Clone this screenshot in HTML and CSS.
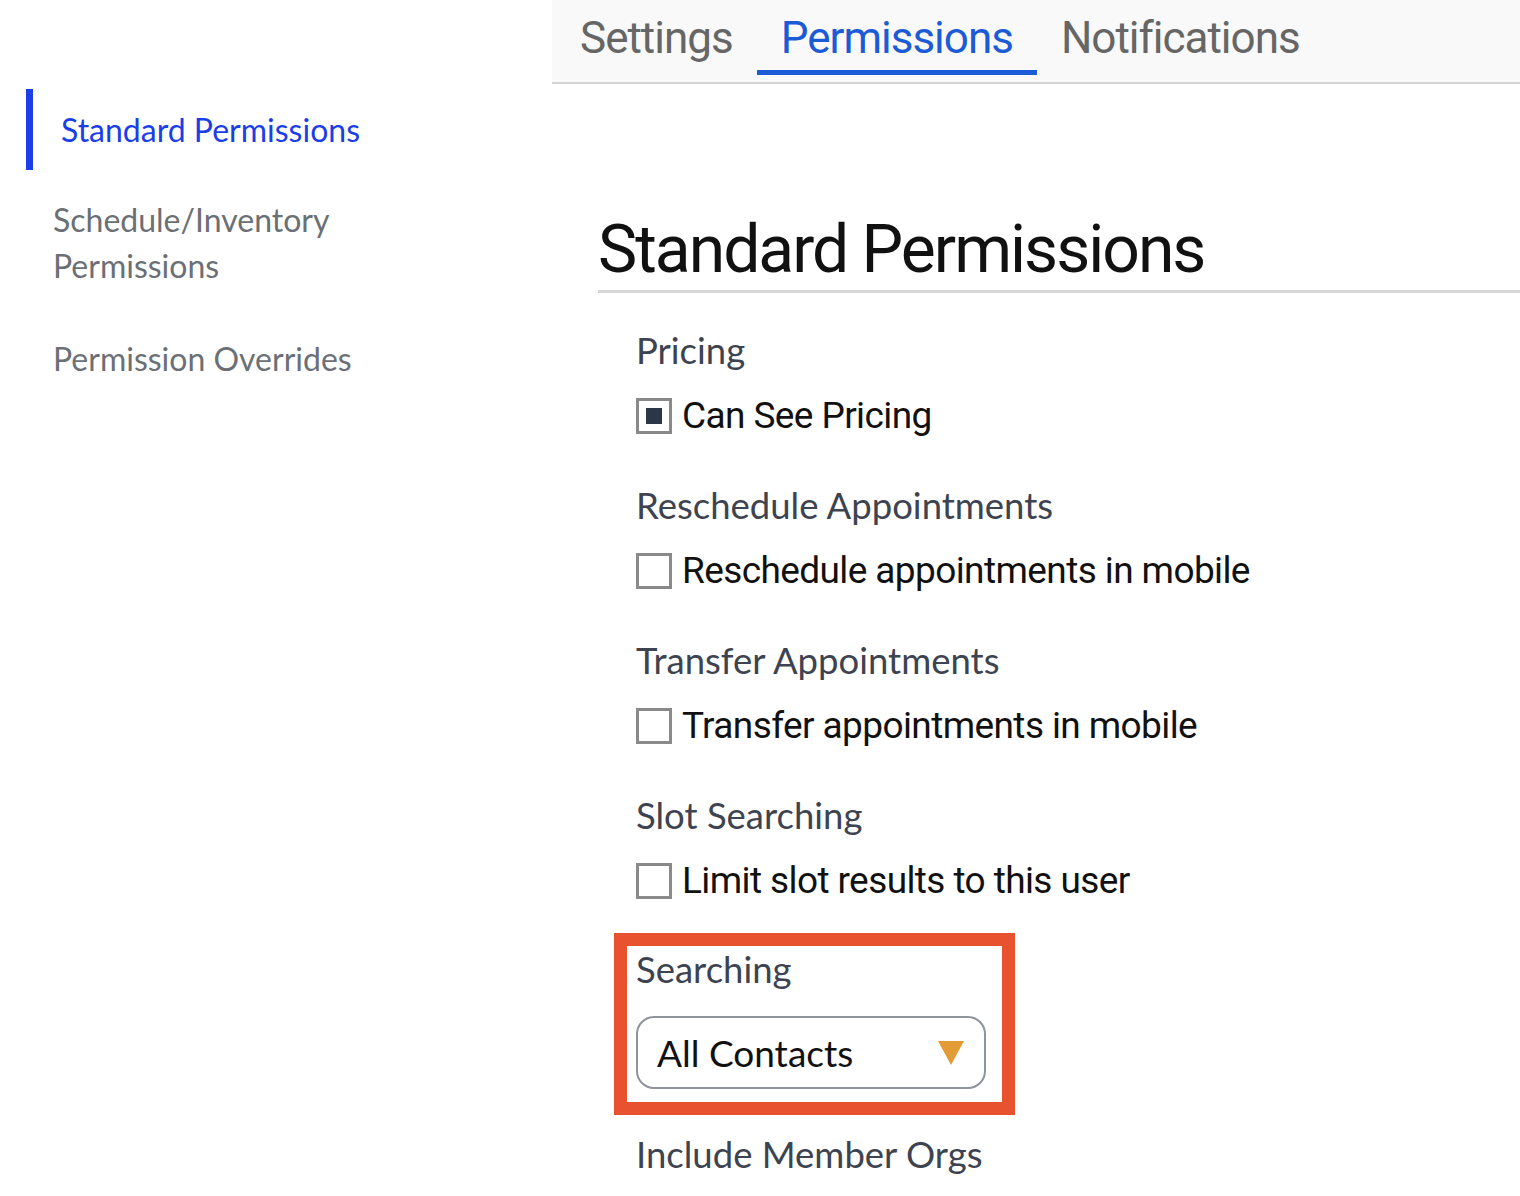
FILE: index.html
```html
<!DOCTYPE html>
<html lang="en">
<head>
<meta charset="utf-8">
<title>Permissions</title>
<link rel="stylesheet" href="styles.css">
</head>
<body>
<div class="app">
  <aside class="sidenav">
    <a class="nav-item active">Standard Permissions</a>
    <a class="nav-item">Schedule/Inventory Permissions</a>
    <a class="nav-item">Permission Overrides</a>
  </aside>
  <main class="main">
    <nav class="tabs">
      <a class="tab">Settings</a>
      <a class="tab active">Permissions</a>
      <a class="tab">Notifications</a>
    </nav>
    <section class="content">
      <h1 class="title">Standard Permissions</h1>
      <div class="groups">
        <div class="group">
          <div class="group-label">Pricing</div>
          <label class="check"><span class="box checked"></span>Can See Pricing</label>
        </div>
        <div class="group">
          <div class="group-label">Reschedule Appointments</div>
          <label class="check"><span class="box"></span>Reschedule appointments in mobile</label>
        </div>
        <div class="group">
          <div class="group-label">Transfer Appointments</div>
          <label class="check"><span class="box"></span>Transfer appointments in mobile</label>
        </div>
        <div class="group">
          <div class="group-label">Slot Searching</div>
          <label class="check"><span class="box"></span>Limit slot results to this user</label>
        </div>
        <div class="highlight">
          <div class="group-label">Searching</div>
          <div class="select">
            <span class="select-value">All Contacts</span>
            <svg class="caret" width="26" height="24" viewBox="0 0 26 24"><polygon points="0,0 26,0 13,24" fill="#e39b35"/></svg>
          </div>
        </div>
        <div class="group-label last">Include Member Orgs</div>
      </div>
    </section>
  </main>
</div>
</body>
</html>
```

FILE: styles.css
```css
html, body {
  margin: 0;
  padding: 0;
  background: #ffffff;
}
body {
  font-family: "Lato", "Noto Sans", sans-serif;
  width: 1520px;
  height: 1196px;
  overflow: hidden;
}
.app {
  display: grid;
  grid-template-columns: 552px 1fr;
  height: 100%;
}

/* Sidebar */
.sidenav {
  display: flex;
  flex-direction: column;
  padding-top: 89px;
}
.nav-item {
  display: block;
  font-size: 32px;
  line-height: 46px;
  color: #6b6f76;
  padding-left: 53px;
  width: 330px;
}
.nav-item.active {
  color: #1a3ee8;
  border-left: 7px solid #1a3ee8;
  margin-left: 26px;
  padding-left: 28px;
  width: 330px;
  height: 81px;
  display: flex;
  align-items: center;
  margin-bottom: 27px;
}
.nav-item + .nav-item {
  margin-bottom: 47px;
}

/* Tabs */
.main {
  display: flex;
  flex-direction: column;
}
.tabs {
  display: flex;
  height: 82px;
  background: #f9f9f9;
  border-bottom: 2px solid #d4d4d4;
  padding-left: 4px;
}
.tab {
  font-family: "Roboto", "Liberation Sans", sans-serif;
  font-size: 44px;
  letter-spacing: -1px;
  color: #666666;
  padding: 0 24px;
  line-height: 76px;
  height: 70px;
  border-bottom: 5px solid transparent;
}
.tab.active {
  color: #1c5bd6;
  border-bottom-color: #1c5bd6;
}

/* Content */
.content {
  padding-left: 46px;
}
.title {
  font-family: "Roboto", "Liberation Sans", sans-serif;
  font-weight: 400;
  font-size: 66px;
  letter-spacing: -2px;
  line-height: 72px;
  color: #111;
  margin: 130px 0 0 0;
  padding-bottom: 4px;
  border-bottom: 3px solid #d6d6d6;
}
.groups {
  display: flex;
  flex-direction: column;
  align-items: flex-start;
  padding-left: 38px;
  padding-top: 35px;
}
.group {
  display: flex;
  flex-direction: column;
  gap: 22px;
  margin-bottom: 45px;
}
.group-label {
  font-size: 36.5px;
  line-height: 44px;
  color: #3d4350;
}
.check {
  display: flex;
  align-items: center;
  gap: 10px;
  font-family: "Roboto", "Liberation Sans", sans-serif;
  font-size: 37px;
  letter-spacing: -0.6px;
  line-height: 44px;
  color: #111;
}
.box {
  width: 30px;
  height: 30px;
  border: 3px solid #8a8a8a;
  display: flex;
  align-items: center;
  justify-content: center;
  flex: none;
}
.box.checked::after {
  content: "";
  width: 16px;
  height: 16px;
  background: #2b3646;
}
.highlight {
  width: 350px;
  border: 13px solid #e8522f;
  margin-left: -22px;
  margin-top: -15px;
  padding: 1px 16px 13px 9px;
}
.select {
  margin-top: 25px;
  height: 69px;
  border: 2px solid #8f939a;
  border-radius: 18px;
  display: flex;
  align-items: center;
  justify-content: space-between;
  padding: 0 20px 0 19px;
}
.select-value {
  font-size: 37px;
  color: #111;
}
.caret {
  display: block;
}
.group-label.last {
  margin-top: 17px;
}
```
